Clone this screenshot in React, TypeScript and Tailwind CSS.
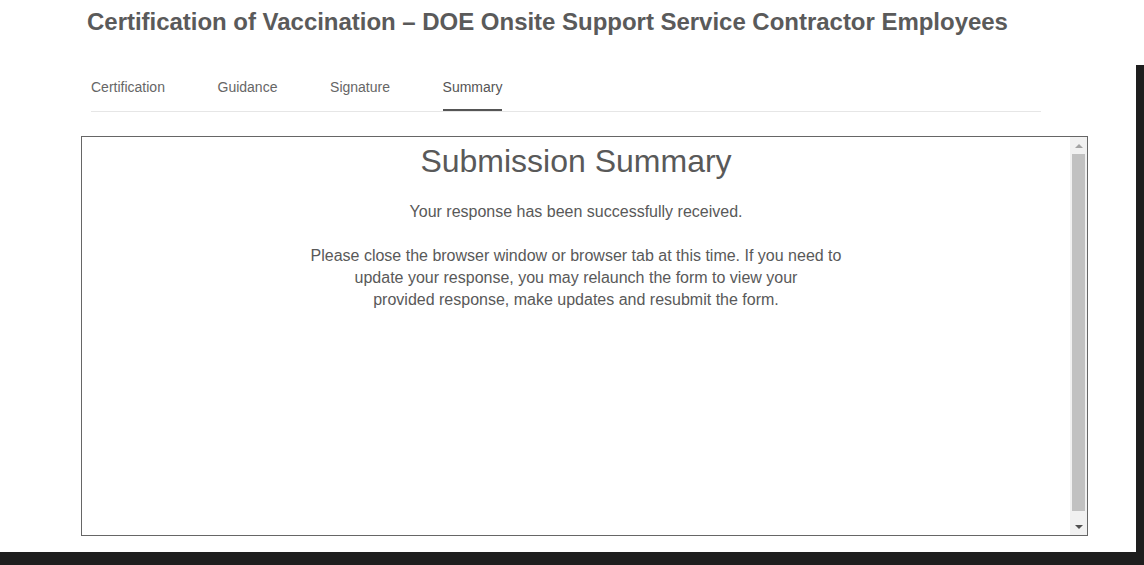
import React from 'react';

const tabs = ['Certification', 'Guidance', 'Signature', 'Summary'];

const ScrollTrack: React.FC = () => (
  <div className="flex w-[17px] shrink-0 flex-col bg-[#f1f1f1]">
    <div className="flex h-[17px] items-center justify-center">
      <div className="h-0 w-0 border-x-[4px] border-b-[4px] border-x-transparent border-b-[#a3a3a3]" />
    </div>
    <div className="flex-1">
      <div className="mx-[2px] h-[357px] bg-[#c1c1c1]" />
    </div>
    <div className="flex h-[17px] items-center justify-center">
      <div className="h-0 w-0 border-x-[4px] border-t-[4px] border-x-transparent border-t-[#505050]" />
    </div>
  </div>
);

export default function App() {
  return (
    <div
      className="flex h-[565px] w-[1144px] flex-col overflow-hidden bg-[#1e1e1e]"
      style={{ fontFamily: '"Liberation Sans", Arial, sans-serif' }}
    >
      <div className="flex h-[552px]">
        <main className="flex-1 bg-white">
          <h1 className="ml-[87px] mt-[8px] text-[24px] font-bold leading-[28px] tracking-[-0.025px] text-[#5a5a5a]">
            Certification of Vaccination – DOE Onsite Support Service Contractor Employees
          </h1>

          <nav className="ml-[91px] mt-[41px] flex w-[950px] gap-[52.6px] border-b border-[#e6e6e6]">
            {tabs.map((t) => (
              <div
                key={t}
                className={
                  t === 'Summary'
                    ? 'border-b-2 border-[#555] pb-[12px] text-[14px] leading-[20px] text-[#555]'
                    : 'border-b-2 border-transparent pb-[12px] text-[14px] leading-[20px] text-[#666]'
                }
              >
                {t}
              </div>
            ))}
          </nav>

          <section className="ml-[81px] mt-[24px] flex h-[400px] w-[1007px] border border-[#666]">
            <div className="flex-1 pt-[6px] text-center text-[#595959]">
              <h2 className="text-[32px] leading-[37px]">Submission Summary</h2>
              <p className="mt-[21px] text-[16px] leading-[22px]">
                Your response has been successfully received.
              </p>
              <p className="mt-[22px] text-[16px] leading-[22px]">
                Please close the browser window or browser tab at this time. If you need to
                <br />
                update your response, you may relaunch the form to view your
                <br />
                provided response, make updates and resubmit the form.
              </p>
            </div>
            <ScrollTrack />
          </section>
        </main>
        <div className="flex w-[8px] flex-col">
          <div className="h-[65px] bg-white" />
          <div className="flex-1 bg-[#1e1e1e]" />
        </div>
      </div>
    </div>
  );
}
